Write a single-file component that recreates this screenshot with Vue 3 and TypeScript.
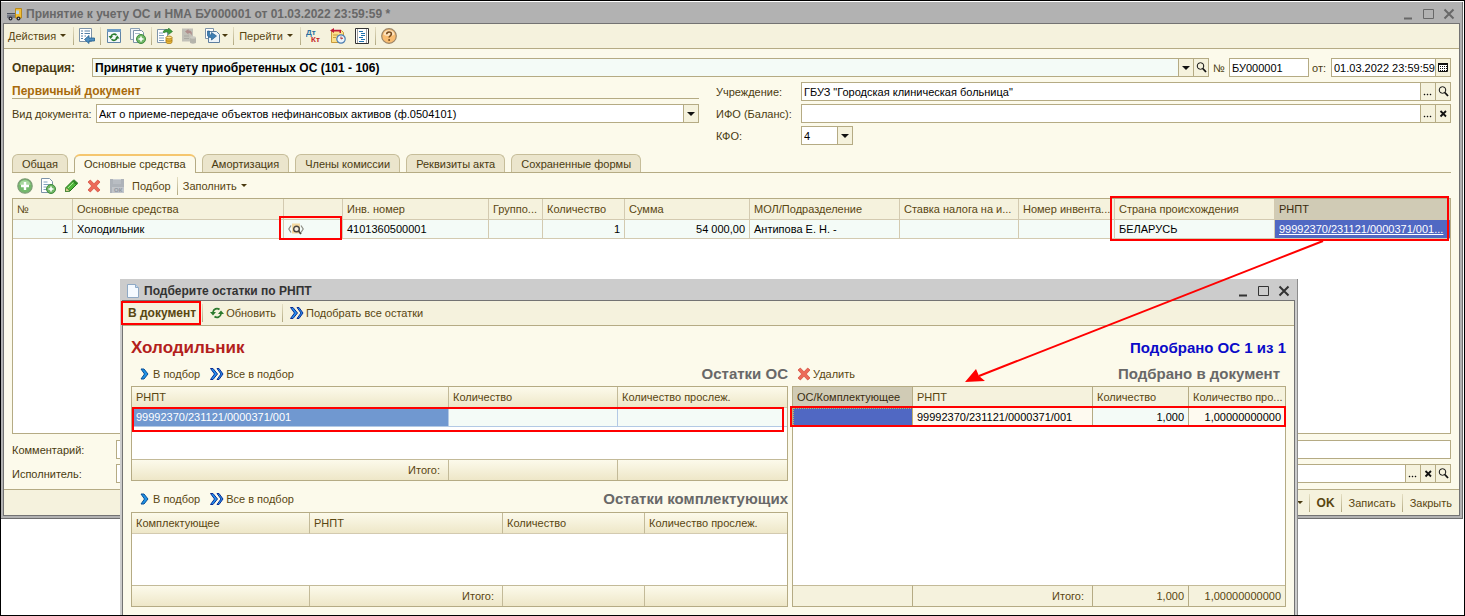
<script setup lang="ts">
import { ref } from 'vue'

interface Column {
  title: string
  width?: number
  current?: boolean
}

const operation = ref('Принятие к учету приобретенных ОС (101 - 106)')
const docKind = ref('Акт о приеме-передаче объектов нефинансовых активов (ф.0504101)')
const docNumber = ref('БУ000001')
const docDate = ref('01.03.2022 23:59:59')
const institution = ref('ГБУЗ "Городская клиническая больница"')
const balance = ref('')
const kfo = ref('4')
const comment = ref('')
const executor = ref('')
const activeTab = ref(1)

const tabs = ['Общая', 'Основные средства', 'Амортизация', 'Члены комиссии', 'Реквизиты акта', 'Сохраненные формы']

const assetColumns: Column[] = [
  { title: '№', width: 60 },
  { title: 'Основные средства', width: 211 },
  { title: '', width: 59 },
  { title: 'Инв. номер', width: 146 },
  { title: 'Группо...', width: 54 },
  { title: 'Количество', width: 82 },
  { title: 'Сумма', width: 125 },
  { title: 'МОЛ/Подразделение', width: 150 },
  { title: 'Ставка налога на и...', width: 119 },
  { title: 'Номер инвента...', width: 96 },
  { title: 'Страна происхождения', width: 160 },
  { title: 'РНПТ', current: true },
]

const restColumns: Column[] = [
  { title: 'РНПТ', width: 317 },
  { title: 'Количество', width: 169 },
  { title: 'Количество прослеж.' },
]

const partColumns: Column[] = [
  { title: 'Комплектующее', width: 178 },
  { title: 'РНПТ', width: 193 },
  { title: 'Количество', width: 142 },
  { title: 'Количество прослеж.' },
]

const pickedColumns: Column[] = [
  { title: 'ОС/Комплектующее', width: 120, current: true },
  { title: 'РНПТ', width: 180 },
  { title: 'Количество', width: 96 },
  { title: 'Количество про...' },
]

const plusDisc = '<circle cx="11" cy="11" r="4.500" fill="#6fb765" stroke="#3f8a3c"/><path d="M11 8.500v5M8.500 11h5" stroke="#fff" stroke-width="1.600"/>'
const coins = '<path d="M9 9.500v4.500c0 2.200 6 2.200 6 0V9.500z" fill="#e9b93a" stroke="#a87816" stroke-width=".8"/><ellipse cx="12" cy="9.500" rx="3" ry="1.400" fill="#ffe48a" stroke="#a87816" stroke-width=".8"/><path d="M9 12c0 1.600 6 1.600 6 0" fill="none" stroke="#a87816" stroke-width=".8"/>'

const icons: Record<string, string> = {
  truck:
    '<path d="M0 8.500h9V12H0z" fill="#777c88"/><path d="M0 7.500h9" stroke="#4c5260"/><path d="M8.500 2.500h6v9.500h-6z" fill="#f2bf35" stroke="#b98a1c"/><path d="M9 4.500h3V8H9z" fill="#b8d4ee"/><circle cx="3.500" cy="12.500" r="2" fill="#2c2c34"/><circle cx="11.500" cy="12.500" r="2" fill="#2c2c34"/><circle cx="3.500" cy="12.500" r=".7" fill="#ccc"/><circle cx="11.500" cy="12.500" r=".7" fill="#ccc"/>',
  listArrow:
    '<path d="M.5 .5h12v13H.5z" fill="#fff" stroke="#7d93a8"/><path d="M2 3h2M5.500 3H11M2 5.500h2M5.500 5.500H11M2 8h2M5.500 8H7M2 10.500h2" stroke="#5580a6"/><path d="M5.500 11.500 10 7.500V10h5.500v3H10v2.500z" fill="#4f8fc0" stroke="#22608f" stroke-width=".8"/>',
  reload:
    '<path d="M1.500 1.500h13v13h-13z" fill="#f4f8fb" stroke="#5f84a5"/><path d="M1 1h14v3H1z" fill="#6e9cc4"/><path d="M5 8.500a3.200 3 0 0 1 5.500-1.300M11 10a3.200 3 0 0 1-5.500 1.300" fill="none" stroke="#2b7d31" stroke-width="1.600"/><path d="M2.500 8H7l-2.300 3zM13.500 10.500H9l2.300-3z" fill="#2b7d31"/>',
  copy:
    '<path d="M.5 .5h9v11h-9z" fill="#eef3f7" stroke="#8ba0b3"/><path d="M3.500 2.500h8l2 2v10h-10z" fill="#fff" stroke="#7d93a8"/><path d="M5 5.500h5" stroke="#a9bccb"/>' + plusDisc,
  post:
    '<path d="M.5 1.500h10v13H.5z" fill="#fff" stroke="#8096aa"/><path d="M2 5h4M2 7.500h5M2 10h5M2 12.500h5" stroke="#7fa1be"/><path d="M6 4c1-2.500 4-3 5.500-2V0l4 3.500-4 3V4.500C9.500 3.500 8 4 7 5z" fill="#3f9e3d" stroke="#23702a" stroke-width=".6"/>' + coins,
  unpost:
    '<path d="M1 .5h11v13H1z" fill="#c2c1b8"/><path d="M3 8h5M3 10.500h5" stroke="#aaa9a2"/><path d="M4 3.500 7.500 1v1.500c3 0 4 2 3 5-.5-2-1.500-2.500-3-2.500v1.500z" fill="#b08f8c"/><path d="M9 9.500v5c0 1.500 6 1.500 6 0v-5z" fill="#b5b4ab"/><ellipse cx="12" cy="9.500" rx="3" ry="1.300" fill="#cccbc2"/>',
  basedOn:
    '<path d="M.5 .5h8v10h-8z" fill="#fff" stroke="#7d93a8"/><path d="M3.500 3.500h8l3 3v8h-11z" fill="#eef4f9" stroke="#5e7f9f"/><path d="M2.500 3v4c0 2 1.500 2.500 4 2.500V12l5-4-5-3.500V7C5 7 4.500 6.500 4.500 3z" fill="#3f7fb3" stroke="#235c8b" stroke-width=".7"/>',
  dtkt:
    '<text x="0" y="7" font-size="8" font-weight="700" fill="#2a6f9f" font-family="Liberation Sans, sans-serif">Дт</text><text x="5" y="14" font-size="8" font-weight="700" fill="#c3261d" font-family="Liberation Sans, sans-serif">Кт</text>',
  history:
    '<path d="M1.500 2.500h10l2 2v10h-12z" fill="#fbe08a" stroke="#c89a3b"/><path d="M3 7h5M3 9.500h3" stroke="#c89a3b"/><path d="M0 2.500 4 0v1.700h7V5H9.500V3.500H4V5z" fill="#c01a38"/><circle cx="11" cy="11" r="4.200" fill="#eaf3fb" stroke="#4b7db0" stroke-width="1.200"/><path d="M11 8.500V11l2-1" fill="none" stroke="#b03030"/>',
  report:
    '<path d="M1.500 .5h13v15h-13z" fill="#fff" stroke="#333"/><path d="M3.500 1v14M12.500 1v14" stroke="#a0a0a0"/><path d="M5 3.500h4M7 5.500h4M7 7.500h4M5 9.500h4M7 11.500h4M5 13.500h5" stroke="#1f72ad"/>',
  help:
    '<circle cx="8" cy="8" r="7.300" fill="#f8bd72" stroke="#9b8567" stroke-width="1.200"/><path d="M2.500 6.500a5.700 5.700 0 0 1 11 0c-3 2-8 2-11 0z" fill="#fde3bd"/><path d="M5.700 6.200c0-3 4.800-3 4.700-.1 0 1.700-2.300 1.800-2.300 3.500" fill="none" stroke="#774b1d" stroke-width="1.600"/><circle cx="8.100" cy="12" r="1" fill="#774b1d"/>',
  add:
    '<circle cx="8" cy="8" r="7.200" fill="#74b96c" stroke="#7c9c75" stroke-width="1.200"/><path d="M2.500 6.500a5.700 5.700 0 0 1 11 0c-3 1.500-8 1.500-11 0z" fill="#a9d8a0"/><path d="M8 4v8M4 8h8" stroke="#fff" stroke-width="2.400"/>',
  addCopy:
    '<path d="M1.500 .5h8l3 3v11h-11z" fill="#fff" stroke="#7d93a8"/><path d="M3.500 4h4M3.500 6.500h6M3.500 9h3M3.500 11.500h3" stroke="#7fa1be"/>' + plusDisc,
  pencil:
    '<path d="M2.500 13.500 3 9.500 9.500 3l4 3.500L7 13z" fill="#4fb63a" stroke="#24731c"/><path d="M9.500 3 11 1.700l4 3.600-1.500 1.200z" fill="#2f8c25" stroke="#24731c" stroke-width=".6"/><path d="m5 10 5.500-5.500" stroke="#a8e596"/><path d="M2.500 13.500 3 9.500l4 3.500z" fill="#f0d9a0" stroke="#24731c" stroke-width=".6"/>',
  remove:
    '<path d="M2 4 4.300 2 8 5.800 11.700 2 14 4l-3.700 4 3.700 4-2.300 2L8 10.200 4.300 14 2 12l3.700-4z" fill="#ec6a59" stroke="#cf4839" stroke-width=".7"/>',
  save:
    '<path d="M1 1h14v14H1z" fill="#aeb3b9"/><path d="M4 1h8v5H4z" fill="#ced2d6"/><path d="M4 3h8M4 5h8" stroke="#a3a8af"/><path d="M3 9h12v6H3z" fill="#c1c5ca"/><text x="5" y="14" font-size="6" font-weight="700" fill="#9298a0" font-family="Liberation Sans, sans-serif">ОК</text>',
  pick:
    '<path d="M3 4.500 .8 8 3 11.500M13 4.500 15.200 8 13 11.500" fill="none" stroke="#8c8c84" stroke-width="1.200"/><path d="M4 2.500h8v10H4z" fill="#f5d9a0"/><circle cx="8.500" cy="8" r="2.800" fill="#f7efe0" stroke="#4b4640" stroke-width="1.400"/><path d="m10.500 10 2.500 3" stroke="#4b4640" stroke-width="1.800"/>',
  page: '<path d="M2.500 1.500h8l3 3v10h-11z" fill="#f5faff" stroke="#8fa9c4"/><path d="M10.500 1.500v3h3" fill="#bcd5ee" stroke="#8fa9c4"/>',
  refresh:
    '<path d="M4 7.500V7a4 4 0 0 1 6.500-2.500M12 8.500V9a4 4 0 0 1-6.500 2.500" fill="none" stroke="#2c7a2e" stroke-width="1.700"/><path d="M1 7h6l-3 3.500zM15 9H9l3-3.500z" fill="#2c7a2e"/>',
  next: '<path d="M5 3h3l4 5-4 5H5l3.500-5z" fill="#1f93e6" stroke="#0a4e96"/>',
  nextAll: '<path d="M1.500 2.500h2.500l4.500 5.500-4.500 5.500H1.500L5.500 8zM8 2.500h2L14 8l-4 5.500H8L12 8z" fill="#2492f0" stroke="#0b2c92"/>',
  lens: '<circle cx="5.500" cy="5" r="3.300" fill="none" stroke="#111"/><path d="M7.800 7.500 11 11" stroke="#111" stroke-width="1.800"/>',
  clear: '<path d="m3.500 4 5.500 5.500M9 4 3.500 9.500" stroke="#111" stroke-width="1.800"/>',
  dots: '<path d="M2 9h1v1H2zM5 9h1v1H5zM8 9h1v1H8z" fill="#111" stroke="#111" stroke-width=".4"/>',
  calendar: '<path d="M1.500 2.500h9v8h-9z" fill="#fff" stroke="#111"/><path d="M1 3h10" stroke="#111" stroke-width="2"/><path d="M3 5.500h7M3 7.500h7M3 9.500h7" stroke="#111" stroke-dasharray="1 1"/>',
}
</script>

<template>
  <main class="stage">
    <section class="window">
      <header class="titlebar">
        <svg class="icon" viewBox="0 0 16 16" v-html="icons.truck" />
        <h1>Принятие к учету ОС и НМА БУ000001 от 01.03.2022 23:59:59 *</h1>
        <div class="sys">
          <button aria-label="Свернуть"><svg viewBox="0 0 12 12"><path d="M1 10.500h8" stroke-width="2" /></svg></button>
          <button aria-label="Развернуть"><svg viewBox="0 0 12 12"><path d="M.5 1.500h10v9H.5z" /></svg></button>
          <button aria-label="Закрыть окно"><svg viewBox="0 0 12 12"><path d="m1.500 1.500 9 9M10.500 1.500l-9 9" stroke-width="2" /></svg></button>
        </div>
      </header>

      <div class="client">
        <nav class="toolbar main-bar">
          <button class="cmd">Действия<i class="caret" /></button>
          <span class="sep" />
          <button class="tool" aria-label="Найти в списке"><svg class="icon" viewBox="0 0 16 16" v-html="icons.listArrow" /></button>
          <span class="sep" />
          <button class="tool" aria-label="Перечитать"><svg class="icon" viewBox="0 0 16 16" v-html="icons.reload" /></button>
          <button class="tool" aria-label="Скопировать"><svg class="icon" viewBox="0 0 16 16" v-html="icons.copy" /></button>
          <span class="sep" />
          <button class="tool" aria-label="Провести"><svg class="icon" viewBox="0 0 16 16" v-html="icons.post" /></button>
          <button class="tool" aria-label="Отменить проведение" disabled><svg class="icon" viewBox="0 0 16 16" v-html="icons.unpost" /></button>
          <button class="tool wide" aria-label="Ввести на основании"><svg class="icon" viewBox="0 0 16 16" v-html="icons.basedOn" /><i class="caret tight" /></button>
          <span class="sep" />
          <button class="cmd">Перейти<i class="caret" /></button>
          <span class="sep" />
          <button class="tool" aria-label="Проводки"><svg class="icon" viewBox="0 0 16 16" v-html="icons.dtkt" /></button>
          <button class="tool" aria-label="История"><svg class="icon" viewBox="0 0 16 16" v-html="icons.history" /></button>
          <button class="tool" aria-label="Отчет"><svg class="icon" viewBox="0 0 16 16" v-html="icons.report" /></button>
          <span class="sep" />
          <button class="tool" aria-label="Справка"><svg class="icon" viewBox="0 0 16 16" v-html="icons.help" /></button>
        </nav>

        <div class="form">
          <div class="row">
            <label class="strong op-label" for="operation">Операция:</label>
            <div class="field grow mint">
              <select id="operation" v-model="operation" class="strong"><option>{{ operation }}</option></select>
              <span class="box"><i class="drop" /></span>
              <button class="box" aria-label="Открыть операцию"><svg viewBox="0 0 13 13" v-html="icons.lens" /></button>
            </div>
            <label class="num-label" for="number">№</label>
            <div class="field num"><input id="number" v-model="docNumber" /></div>
            <label class="date-label" for="date">от:</label>
            <div class="field date">
              <input id="date" v-model="docDate" />
              <button class="box" aria-label="Календарь"><svg viewBox="0 0 13 13" v-html="icons.calendar" /></button>
            </div>
          </div>

          <div class="halves">
            <div class="half">
              <h2 class="group">Первичный документ</h2>
              <div class="row">
                <label class="kind-label" for="kind">Вид документа:</label>
                <div class="field grow">
                  <select id="kind" v-model="docKind"><option>{{ docKind }}</option></select>
                  <span class="box"><i class="drop" /></span>
                </div>
              </div>
            </div>
            <div class="half right">
              <div class="row">
                <label class="side-label" for="inst">Учреждение:</label>
                <div class="field grow">
                  <input id="inst" v-model="institution" />
                  <button class="box" aria-label="Выбрать учреждение"><svg viewBox="0 0 13 13" v-html="icons.dots" /></button>
                  <button class="box" aria-label="Открыть учреждение"><svg viewBox="0 0 13 13" v-html="icons.lens" /></button>
                </div>
              </div>
              <div class="row">
                <label class="side-label" for="ifo">ИФО (Баланс):</label>
                <div class="field grow">
                  <input id="ifo" v-model="balance" />
                  <button class="box" aria-label="Выбрать ИФО"><svg viewBox="0 0 13 13" v-html="icons.dots" /></button>
                  <button class="box" aria-label="Очистить ИФО"><svg viewBox="0 0 13 13" v-html="icons.clear" /></button>
                </div>
              </div>
              <div class="row">
                <label class="side-label" for="kfo">КФО:</label>
                <div class="field kfo">
                  <select id="kfo" v-model="kfo"><option>4</option></select>
                  <span class="box"><i class="drop" /></span>
                </div>
              </div>
            </div>
          </div>

          <div class="tabs" role="tablist">
            <button v-for="(tab, i) in tabs" :key="tab" role="tab" :aria-selected="i === activeTab" :class="{ active: i === activeTab }" @click="activeTab = i">{{ tab }}</button>
          </div>

          <div class="panel">
            <div class="subbar">
              <button class="tool" aria-label="Добавить"><svg class="icon" viewBox="0 0 16 16" v-html="icons.add" /></button>
              <button class="tool" aria-label="Добавить копированием"><svg class="icon" viewBox="0 0 16 16" v-html="icons.addCopy" /></button>
              <button class="tool" aria-label="Изменить"><svg class="icon" viewBox="0 0 16 16" v-html="icons.pencil" /></button>
              <button class="tool" aria-label="Удалить строку"><svg class="icon" viewBox="0 0 16 16" v-html="icons.remove" /></button>
              <button class="tool" aria-label="Сохранить строку" disabled><svg class="icon" viewBox="0 0 16 16" v-html="icons.save" /></button>
              <button class="cmd">Подбор</button>
              <span class="sep" />
              <button class="cmd">Заполнить<i class="caret" /></button>
            </div>

            <div class="holder">
              <table class="grid assets">
                <colgroup><col v-for="(c, i) in assetColumns" :key="i" :style="c.width ? { width: c.width + 'px' } : undefined" /></colgroup>
                <thead>
                  <tr><th v-for="(c, i) in assetColumns" :key="i" :class="{ current: c.current }">{{ c.title }}</th></tr>
                </thead>
                <tbody>
                  <tr class="mint">
                    <td class="r">1</td>
                    <td>Холодильник</td>
                    <td><button class="pick" aria-label="Подобрать РНПТ"><svg class="icon" viewBox="0 0 16 16" v-html="icons.pick" /></button></td>
                    <td>4101360500001</td>
                    <td></td>
                    <td class="r">1</td>
                    <td class="r">54 000,00</td>
                    <td>Антипова Е. Н. -</td>
                    <td></td>
                    <td></td>
                    <td>БЕЛАРУСЬ</td>
                    <td class="selected"><a href="#rnpt">99992370/231121/0000371/001...</a></td>
                  </tr>
                  <tr class="filler"><td colspan="12"></td></tr>
                </tbody>
              </table>
              <span class="mark mark-pick" />
              <span class="mark mark-rnpt" />
            </div>
          </div>

          <div class="row bottom">
            <label class="foot-label" for="comment">Комментарий:</label>
            <div class="field grow"><input id="comment" v-model="comment" /></div>
          </div>
          <div class="row bottom">
            <label class="foot-label" for="executor">Исполнитель:</label>
            <div class="field grow">
              <input id="executor" v-model="executor" />
              <button class="box" aria-label="Выбрать исполнителя"><svg viewBox="0 0 13 13" v-html="icons.dots" /></button>
              <button class="box" aria-label="Очистить исполнителя"><svg viewBox="0 0 13 13" v-html="icons.clear" /></button>
              <button class="box" aria-label="Открыть исполнителя"><svg viewBox="0 0 13 13" v-html="icons.lens" /></button>
            </div>
          </div>
        </div>

        <footer class="actions">
          <button class="cmd" aria-label="Меню"><i class="caret" /></button>
          <span class="sep" />
          <button class="cmd strong">OK</button>
          <span class="sep" />
          <button class="cmd">Записать</button>
          <span class="sep" />
          <button class="cmd">Закрыть</button>
        </footer>
      </div>
    </section>

    <section class="dialog" role="dialog" aria-labelledby="dialog-title">
      <header class="titlebar light">
        <svg class="icon" viewBox="0 0 16 16" v-html="icons.page" />
        <h2 id="dialog-title">Подберите остатки по РНПТ</h2>
        <div class="sys">
          <button aria-label="Свернуть"><svg viewBox="0 0 12 12"><path d="M1 10.500h8" stroke-width="2" /></svg></button>
          <button aria-label="Развернуть"><svg viewBox="0 0 12 12"><path d="M.5 1.500h10v9H.5z" /></svg></button>
          <button aria-label="Закрыть окно"><svg viewBox="0 0 12 12"><path d="m1.500 1.500 9 9M10.500 1.500l-9 9" stroke-width="2" /></svg></button>
        </div>
      </header>
      <div class="client dialog-client">
        <nav class="toolbar">
          <button class="cmd strong">В документ</button>
          <span class="sep" />
          <button class="cmd"><svg class="icon" viewBox="0 0 16 16" v-html="icons.refresh" />Обновить</button>
          <span class="sep" />
          <button class="cmd"><svg class="icon" viewBox="0 0 16 16" v-html="icons.nextAll" />Подобрать все остатки</button>
          <span class="mark mark-doc" />
        </nav>
        <div class="dialog-body">
          <div class="headline">
            <h3 class="item">Холодильник</h3>
            <p class="picked">Подобрано ОС 1 из 1</p>
          </div>
          <div class="panes">
            <div class="pane">
              <div class="pane-head">
                <button class="cmd"><svg class="icon" viewBox="0 0 16 16" v-html="icons.next" />В подбор</button>
                <button class="cmd"><svg class="icon" viewBox="0 0 16 16" v-html="icons.nextAll" />Все в подбор</button>
                <h4>Остатки ОС</h4>
              </div>
              <div class="holder">
                <table class="grid shaded rests">
                  <colgroup><col v-for="(c, i) in restColumns" :key="i" :style="c.width ? { width: c.width + 'px' } : undefined" /></colgroup>
                  <thead>
                    <tr><th v-for="c in restColumns" :key="c.title">{{ c.title }}</th></tr>
                  </thead>
                  <tbody>
                    <tr class="mint"><td class="chosen">99992370/231121/0000371/001</td><td></td><td></td></tr>
                    <tr class="filler"><td colspan="3"></td></tr>
                  </tbody>
                  <tfoot>
                    <tr><td class="r total">Итого:</td><td></td><td></td></tr>
                  </tfoot>
                </table>
                <span class="mark mark-rest" />
              </div>
              <div class="pane-head second">
                <button class="cmd"><svg class="icon" viewBox="0 0 16 16" v-html="icons.next" />В подбор</button>
                <button class="cmd"><svg class="icon" viewBox="0 0 16 16" v-html="icons.nextAll" />Все в подбор</button>
                <h4>Остатки комплектующих</h4>
              </div>
              <table class="grid shaded parts">
                <colgroup><col v-for="(c, i) in partColumns" :key="i" :style="c.width ? { width: c.width + 'px' } : undefined" /></colgroup>
                <thead>
                  <tr><th v-for="c in partColumns" :key="c.title">{{ c.title }}</th></tr>
                </thead>
                <tbody>
                  <tr class="filler"><td colspan="4"></td></tr>
                </tbody>
                <tfoot>
                  <tr><td></td><td class="r total">Итого:</td><td></td><td></td></tr>
                </tfoot>
              </table>
            </div>

            <div class="pane">
              <div class="pane-head chosen-head">
                <button class="cmd"><svg class="icon" viewBox="0 0 16 16" v-html="icons.remove" />Удалить</button>
                <h4>Подбрано в документ</h4>
              </div>
              <div class="holder">
                <table class="grid picks">
                  <colgroup><col v-for="(c, i) in pickedColumns" :key="i" :style="c.width ? { width: c.width + 'px' } : undefined" /></colgroup>
                  <thead>
                    <tr><th v-for="c in pickedColumns" :key="c.title" :class="{ current: c.current }">{{ c.title }}</th></tr>
                  </thead>
                  <tbody>
                    <tr><td class="selected focus"></td><td class="warm">99992370/231121/0000371/001</td><td class="r mint-cell">1,000</td><td class="r warm">1,00000000000</td></tr>
                    <tr class="filler"><td colspan="4"></td></tr>
                  </tbody>
                  <tfoot>
                    <tr><td></td><td class="r total">Итого:</td><td class="r">1,000</td><td class="r">1,00000000000</td></tr>
                  </tfoot>
                </table>
                <span class="mark mark-picked" />
              </div>
            </div>
          </div>
        </div>
      </div>
    </section>

    <svg class="arrow" viewBox="0 0 370 144" aria-hidden="true">
      <path d="M358 1 14 136" stroke="#f00" stroke-width="2" fill="none" />
      <path d="M0 142 11 129 14 136 20 141z" fill="#f00" />
    </svg>
  </main>
</template>

<style>
body {
  margin: 0;
  background: #fff;
}
</style>

<style scoped>
* {
  box-sizing: border-box;
}

.stage {
  position: relative;
  min-height: 100vh;
  overflow: hidden;
  padding: 1px 1px 0 0;
  border: 1px solid #000;
  background: #fff;
  color: #4a3a10;
  font: 11px/14px "Liberation Sans", Arial, sans-serif;
}

h1, h2, h3, h4, p {
  margin: 0;
}

button, input, select {
  margin: 0;
  padding: 0;
  border: 0;
  border-radius: 0;
  background: none;
  color: inherit;
  font: inherit;
}

.strong, .field select.strong {
  font-size: 12px;
  font-weight: 700;
}

.icon {
  display: block;
  flex: none;
  width: 16px;
  height: 16px;
}

.window {
  padding: 0 2px 2px;
  background: #b2b2b2;
  border-right: 1px solid #6e6e6e;
  border-bottom: 1px solid #6e6e6e;
}

.titlebar {
  display: flex;
  align-items: center;
  height: 21px;
  padding: 2px 5px 0 4px;
  color: #686868;
}

.titlebar h1, .titlebar h2 {
  margin-left: 3px;
  font-size: 12px;
  line-height: 16px;
  font-weight: 700;
  white-space: nowrap;
}

.titlebar.light {
  padding-left: 3px;
  color: #333;
}

.sys {
  display: flex;
  gap: 8px;
  margin-left: auto;
}

.sys button, .sys svg {
  display: block;
  width: 12px;
  height: 12px;
}

.sys path {
  fill: none;
  stroke: currentColor;
}

.client {
  border: 1px solid #737373;
  background: #fcfaeb;
}

.toolbar {
  position: relative;
  display: flex;
  align-items: center;
  height: 25px;
  border-bottom: 1px solid #b5ab84;
  background: #f5f2dd;
}

.cmd {
  display: flex;
  align-items: center;
  height: 20px;
  padding: 0 5px 0 4px;
  color: #594611;
  white-space: nowrap;
}

.main-bar .cmd {
  padding-right: 6px;
}

.cmd .icon {
  margin-right: 1px;
}

.tool {
  display: flex;
  align-items: center;
  justify-content: center;
  width: 24px;
  height: 20px;
}

.tool.wide {
  width: 31px;
}

.sep {
  flex: none;
  width: 1px;
  height: 18px;
  margin: 0 1px;
  background: linear-gradient(#e4dec2, #b2a982);
}

.caret {
  width: 0;
  height: 0;
  margin: 0 0 1px 4px;
  border: 3px solid transparent;
  border-top-color: #4a3a10;
  border-bottom: 0;
}

.caret.tight {
  margin-left: 1px;
}

.form {
  padding: 9px 8px 6px;
}

.row {
  display: flex;
  align-items: center;
  height: 19px;
}

.field {
  display: flex;
  height: 19px;
  border: 1px solid #b5ab84;
  background: #fff;
  color: #000;
}

.field.mint {
  background: #f4fbf7;
}

.grow {
  flex: 1;
  min-width: 0;
}

.field input, .field select {
  flex: 1;
  min-width: 0;
  height: 17px;
  padding: 0 0 0 2px;
  appearance: none;
  outline: 0;
}

.box {
  display: flex;
  flex: none;
  align-items: center;
  justify-content: center;
  width: 15px;
  height: 17px;
  border-left: 1px solid #b5ab84;
  background: #f5f2dd;
}

.box svg {
  display: block;
  width: 13px;
  height: 13px;
}

.drop {
  border: 4px solid transparent;
  border-top-color: #111;
  border-bottom: 0;
}

.op-label {
  width: 80px;
}

.num-label {
  width: 20px;
  padding-left: 4px;
}

.num {
  width: 80px;
}

.date-label {
  width: 22px;
  padding-left: 3px;
}

.date {
  width: 120px;
}

.halves {
  display: grid;
  grid-template-columns: 687fr 735fr;
  gap: 17px;
  margin-top: 5px;
}

.group {
  height: 17px;
  margin-bottom: 5px;
  border-bottom: 1px solid #b5ab84;
  color: #a86a0c;
  font-size: 12px;
  line-height: 18px;
}

.half.right {
  display: grid;
  gap: 3px;
}

.kind-label {
  width: 84px;
}

.side-label {
  width: 85px;
}

.kfo {
  width: 52px;
}

.tabs {
  display: flex;
  gap: 6px;
  height: 18px;
  margin-top: 9px;
}

.tabs button {
  height: 18px;
  padding: 1px 9px 0;
  border: 1px solid #c6bd99;
  border-bottom: 0;
  border-radius: 6px 6px 0 0;
  background: #ebe5cc;
  white-space: nowrap;
}

.tabs button.active {
  z-index: 1;
  height: 19px;
  padding: 0 9px 1px;
  border-color: #b5ab84;
  border-top: 2px solid #f5c66e;
  background: #fcfaeb;
}

.panel {
  border-top: 1px solid #b5ab84;
}

.subbar {
  display: flex;
  align-items: center;
  height: 25px;
  padding-left: 1px;
}

.subbar .tool {
  width: 23px;
}

.holder {
  position: relative;
}

.grid {
  width: 100%;
  table-layout: fixed;
  border-collapse: separate;
  border-spacing: 0;
  border: 1px solid #b5ab84;
  background: #fff;
  color: #000;
}

.grid th, .grid td {
  padding: 0 4px;
  overflow: hidden;
  border-right: 1px solid #d3cab0;
  border-bottom: 1px solid #d3cab0;
  text-align: left;
  white-space: nowrap;
}

.grid th:last-child, .grid td:last-child {
  border-right: 0;
}

.grid th {
  height: 21px;
  background: #f5f2dd;
  color: #594611;
  font-weight: 400;
}

.grid td {
  height: 19px;
}

.grid .r {
  text-align: right;
}

.grid th.current {
  background: #d0cbb5;
  color: #3a2c10;
}

.grid .filler td {
  height: 194px;
  border: 0;
}

.grid .mint td, .grid .mint-cell {
  background: #f4fbf7;
}

.grid .warm {
  background: #fefaf0;
}

.grid tr td.selected {
  padding-right: 0;
  background: #5068c3;
  color: #fff;
}

.grid td.focus {
  outline: 1px dotted #c9b45c;
  outline-offset: -1px;
}

.selected a {
  color: #fff;
}

.pick {
  display: block;
}

.grid tfoot td {
  height: 21px;
  border-top: 1px solid #c3ba98;
  border-bottom: 0;
  border-right-color: #b5ab84;
  background: #f5f2dd;
  color: #594611;
}

.grid tfoot .total {
  padding-right: 8px;
}

.grid.picks th, .grid.picks td {
  border-right-color: #b5ab84;
}

.grid.shaded th, .grid.shaded tfoot td {
  background: linear-gradient(#fcfaeb, #eee7c8);
  border-right-color: #c3ba98;
}

.grid.shaded .mint td {
  border-color: #b3c9e5;
}

.grid .mint td.chosen {
  background: #7098d0;
  color: #fff;
}

.grid.rests .filler td {
  height: 32px;
}

.grid.parts .filler td {
  height: 51px;
}

.grid.picks .filler td {
  height: 158px;
}

.row.bottom {
  margin-top: 5px;
}

.row.bottom:nth-of-type(5) {
  margin-top: 6px;
}

.foot-label {
  width: 104px;
}

.actions {
  display: flex;
  align-items: center;
  justify-content: flex-end;
  height: 26px;
  padding-right: 2px;
  border-top: 1px solid #b5ab84;
  background: #f5f2dd;
}

.actions .cmd {
  padding-left: 6px;
}

.dialog {
  position: absolute;
  top: 278px;
  right: 166px;
  bottom: 0;
  left: 119px;
  padding: 0 2px;
  border-right: 1px solid #8c8c8c;
  background: #cccccc;
}

.dialog-client {
  border-bottom: 0;
}

.dialog-client .toolbar .cmd {
  padding-left: 5px;
}

.dialog-body {
  padding: 12px 8px 9px;
}

.headline {
  display: flex;
  align-items: center;
  justify-content: space-between;
  height: 20px;
  font-size: 15px;
  font-weight: 700;
}

.item {
  color: #b3201c;
  font-size: 17px;
}

.picked {
  color: #0a0ac8;
}

.panes {
  display: grid;
  grid-template-columns: 657fr 494fr;
  gap: 4px;
}

.pane-head {
  display: flex;
  align-items: center;
  height: 28px;
  padding: 4px 0 0 1px;
}

.pane-head.second {
  height: 31px;
}

.pane-head h4 {
  margin-left: auto;
  color: #686868;
  font-size: 15px;
}

.pane-head.chosen-head {
  padding: 4px 6px 0 0;
}

.mark {
  position: absolute;
  border: 2px solid #f00;
  pointer-events: none;
}

.mark-pick {
  top: 18px;
  left: 267px;
  width: 63px;
  height: 24px;
}

.mark-rnpt {
  top: -2px;
  right: 2px;
  width: 339px;
  height: 45px;
}

.mark-doc {
  top: 0;
  left: -2px;
  width: 80px;
  height: 24px;
}

.mark-rest {
  top: 21px;
  left: 1px;
  right: 4px;
  height: 25px;
}

.mark-picked {
  top: 20px;
  left: -2px;
  right: 0;
  height: 21px;
}

.arrow {
  position: absolute;
  top: 239px;
  right: 129px;
  width: 370px;
  height: 144px;
  pointer-events: none;
}
</style>
